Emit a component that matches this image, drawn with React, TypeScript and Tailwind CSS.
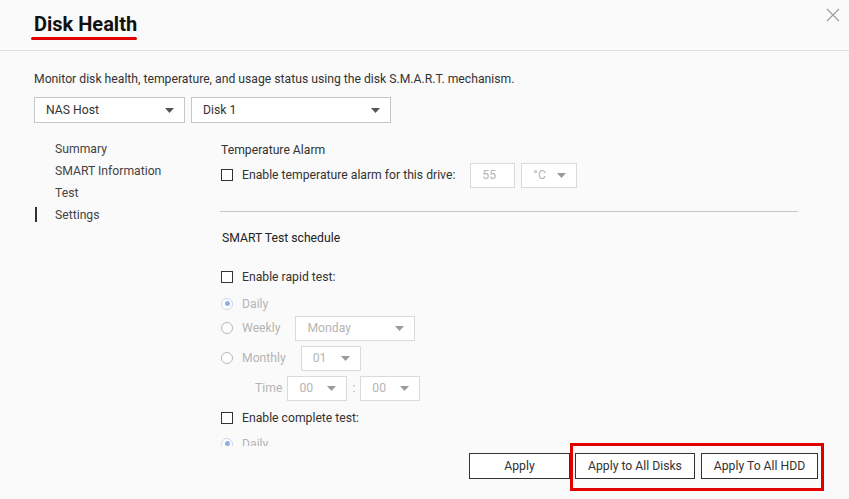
import { FC, ReactNode } from "react"
import clsx from "clsx"

const Caret: FC<{ disabled?: boolean }> = ({ disabled }) => (
  <svg width="9" height="5" viewBox="0 0 9 5" className="shrink-0">
    <path d="M0 0h9L4.5 5z" fill={disabled ? "#9a9a9a" : "#555"} />
  </svg>
)

const Select: FC<{ value: string; className?: string; disabled?: boolean }> = ({
  value,
  className,
  disabled
}) => (
  <div
    className={clsx(
      "flex items-center justify-between border bg-white pl-[11px] pr-[10px]",
      disabled ? "border-[#dadada] text-[#b5b5b5]" : "border-[#c6c6c6] text-[#333]",
      className
    )}
  >
    <span>{value}</span>
    <Caret disabled={disabled} />
  </div>
)

const Checkbox: FC<{ label: string }> = ({ label }) => (
  <div className="flex items-center">
    <span className="h-[12px] w-[12px] border border-[#333] bg-white" />
    <span className="ml-[9px] text-[#333]">{label}</span>
  </div>
)

const Radio: FC<{ label: string; checked?: boolean; children?: ReactNode }> = ({
  label,
  checked,
  children
}) => (
  <div className="flex items-center">
    <span
      className={clsx(
        "flex h-[12px] w-[12px] items-center justify-center rounded-full border bg-white",
        checked ? "border-[#c9d6ec]" : "border-[#b8b8b8]"
      )}
    >
      {checked && <span className="h-[5px] w-[5px] rounded-full bg-[#8fb0e6]" />}
    </span>
    <span className="ml-[9px] text-[#b5b5b5]">{label}</span>
    {children}
  </div>
)

const navItems = ["Summary", "SMART Information", "Test", "Settings"]

export default function App() {
  return (
    <div
      className="relative flex h-[499px] w-[849px] flex-col overflow-hidden bg-[#fafafa] text-[12.2px] text-[#333]"
      style={{ fontFamily: "Roboto, 'Liberation Sans', sans-serif" }}
    >
      {/* header */}
      <div className="flex h-[51px] shrink-0 justify-between border-b border-[#dedede] pl-[34px] pr-[9px]">
        <div className="flex flex-col items-start pt-[12px]">
          <h1 className="text-[20px] leading-[24px] font-bold text-[#111]">Disk Health</h1>
          <span className="-ml-[3px] mt-[1px] h-[3px] w-[106px] rounded-full bg-[#e00000]" />
        </div>
        <button className="mt-[8px] h-[14px] w-[14px]">
          <svg width="14" height="14" viewBox="0 0 14 14">
            <path d="M1 1l12 12M13 1L1 13" stroke="#9a9a9a" strokeWidth="1.1" />
          </svg>
        </button>
      </div>

      {/* body */}
      <div className="flex h-[395px] shrink-0 flex-col overflow-hidden px-[34px] pt-[20px]">
        <p className="leading-[16px]">
          Monitor disk health, temperature, and usage status using the disk S.M.A.R.T. mechanism.
        </p>
        <div className="mt-[10px] flex gap-[6px]">
          <Select value="NAS Host" className="h-[26px] w-[151px]" />
          <Select value="Disk 1" className="h-[26px] w-[200px]" />
        </div>

        <div className="mt-[15px] flex">
          <div className="flex w-[186px] shrink-0 flex-col">
            {navItems.map((item) => (
              <div
                key={item}
                className={clsx(
                  "flex h-[22px] items-center pl-[21px] text-[#444]",
                  item === "Settings" && "relative"
                )}
              >
                {item === "Settings" && (
                  <span className="absolute left-[1px] top-[3px] h-[15px] w-[2px] bg-[#333]" />
                )}
                {item}
              </div>
            ))}
          </div>

          <div className="flex w-[578px] flex-col">
            <div className="flex h-[24px] items-center pl-[1px]">Temperature Alarm</div>
            <div className="flex h-[26px] items-center pl-[1px]">
              <Checkbox label="Enable temperature alarm for this drive:" />
              <div className="ml-[15px] flex h-[25px] w-[45px] items-center border border-[#dadada] bg-white pl-[11px] text-[#b5b5b5]">
                55
              </div>
              <Select value="°C" disabled className="ml-[6px] h-[25px] w-[56px] pl-[10px]" />
            </div>
            <div className="mt-[23px] border-t border-[#c8c8c8]" />
            <div className="mt-[18px] flex h-[16px] items-center pl-[2px] text-[#222]">
              SMART Test schedule
            </div>

            <div className="mt-[20px] flex h-[22px] items-center pl-[1px]">
              <Checkbox label="Enable rapid test:" />
            </div>
            <div className="mt-[4px] flex h-[24px] items-center pl-[1px]">
              <Radio label="Daily" checked />
            </div>
            <div className="flex h-[24px] items-center pl-[1px]">
              <Radio label="Weekly">
                <Select value="Monday" disabled className="ml-[15px] h-[25px] w-[120px]" />
              </Radio>
            </div>
            <div className="mt-[5px] flex h-[26px] items-center pl-[1px]">
              <Radio label="Monthly">
                <Select value="01" disabled className="ml-[15px] h-[25px] w-[60px]" />
              </Radio>
            </div>
            <div className="mt-[4px] flex h-[26px] items-center pl-[35px]">
              <span className="text-[#b5b5b5]">Time</span>
              <Select value="00" disabled className="ml-[5px] h-[25px] w-[60px]" />
              <span className="mx-[5px] text-[#b5b5b5]">:</span>
              <Select value="00" disabled className="h-[25px] w-[60px]" />
            </div>
            <div className="mt-[6px] flex h-[22px] items-center pl-[1px]">
              <Checkbox label="Enable complete test:" />
            </div>
            <div className="mt-[4px] flex h-[22px] items-center pl-[1px]">
              <Radio label="Daily" checked />
            </div>
          </div>
        </div>
      </div>

      {/* footer */}
      <div className="flex flex-1 items-start justify-end pr-[31px] pt-[7px]">
        <button className="h-[26px] w-[101px] border border-[#333] bg-white text-[#333]">Apply</button>
        <button className="ml-[5px] h-[26px] w-[120px] border border-[#333] bg-white text-[#333]">
          Apply to All Disks
        </button>
        <button className="ml-[6px] h-[26px] w-[117px] border border-[#333] bg-white text-[#333]">
          Apply To All HDD
        </button>
      </div>

      {/* highlight annotation */}
      <div className="pointer-events-none absolute left-[570px] top-[443px] h-[48px] w-[254px] border-[3px] border-[#e00000]" />
    </div>
  )
}
